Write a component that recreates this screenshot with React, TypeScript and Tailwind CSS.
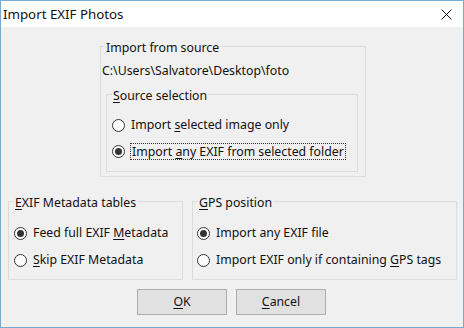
import React from 'react';

function Radio({ checked }: { checked?: boolean }) {
  return (
    <span className="w-[13px] h-[13px] rounded-full border border-[#333333] bg-white flex items-center justify-center shrink-0">
      {checked && <span className="w-[7px] h-[7px] rounded-full bg-[#333333]" />}
    </span>
  );
}

function Legend({ children, ml }: { children: React.ReactNode; ml: string }) {
  return (
    <div className={`-mt-[7px] ${ml} px-[1px] w-fit bg-[#f0f0f0] leading-[16px]`}>{children}</div>
  );
}

const U = ({ children }: { children: React.ReactNode }) => <span className="underline underline-offset-2">{children}</span>;

export default function App() {
  return (
    <div
      className="w-[464px] h-[328px] border border-[#78a9cf] bg-[#f0f0f0] flex flex-col text-[12.3px] text-[#111]"
      style={{ fontFamily: '"Segoe UI", "Noto Sans", sans-serif' }}
    >
      {/* Title bar */}
      <div className="h-[26px] bg-white flex items-center justify-between pl-[2px] pr-[10px] shrink-0">
        <span className="text-[13.3px] leading-[16px]">Import EXIF Photos</span>
        <svg width="11" height="11" viewBox="0 0 11 11" className="mr-[1px]">
          <path d="M0.5 0.5 L10.5 10.5 M10.5 0.5 L0.5 10.5" stroke="#111" strokeWidth="1" />
        </svg>
      </div>

      {/* Import from source */}
      <div className="mt-[19px] ml-[99px] w-[266px] h-[131px] border border-[#dcdcdc] flex flex-col">
        <Legend ml="ml-[4px]">Import from source</Legend>
        <div className="mt-[7px] pl-[1px] leading-[16px]">C:\Users\Salvatore\Desktop\foto</div>
        <div className="mt-[15px] ml-[5px] w-[252px] h-[78px] border border-[#dcdcdc] flex flex-col">
          <Legend ml="ml-[5px]"><U>S</U>ource selection</Legend>
          <div className="mt-[11px] ml-[5px] flex flex-col gap-[6px]">
            <div className="h-[20px] flex items-center gap-[6px]">
              <Radio />
              <span>Import <U>s</U>elected image only</span>
            </div>
            <div className="h-[20px] flex items-center gap-[5px]">
              <Radio checked />
              <span className="border border-dotted border-[#333] px-[1px] leading-[15px]">
                Import <U>a</U>ny EXIF from selected folder
              </span>
            </div>
          </div>
        </div>
      </div>

      {/* Bottom groups */}
      <div className="mt-[24px] ml-[7px] flex gap-[9px]">
        <div className="w-[175px] h-[79px] border border-[#dcdcdc] flex flex-col">
          <Legend ml="ml-[5px]"><U>E</U>XIF Metadata tables</Legend>
          <div className="mt-[12px] ml-[5px] flex flex-col gap-[7px]">
            <div className="h-[20px] flex items-center gap-[6px]">
              <Radio checked />
              <span>Feed full EXIF <U>M</U>etadata</span>
            </div>
            <div className="h-[20px] flex items-center gap-[6px]">
              <Radio />
              <span><U>S</U>kip EXIF Metadata</span>
            </div>
          </div>
        </div>
        <div className="w-[265px] h-[79px] border border-[#dcdcdc] flex flex-col">
          <Legend ml="ml-[5px]"><U>G</U>PS position</Legend>
          <div className="mt-[12px] ml-[4px] flex flex-col gap-[7px]">
            <div className="h-[20px] flex items-center gap-[6px]">
              <Radio checked />
              <span>Import any EXIF file</span>
            </div>
            <div className="h-[20px] flex items-center gap-[6px]">
              <Radio />
              <span>Import EXIF only if containing <U>G</U>PS tags</span>
            </div>
          </div>
        </div>
      </div>

      {/* Buttons */}
      <div className="mt-[9px] ml-[136px] flex gap-[9px]">
        <button className="w-[90px] h-[26px] border border-[#adadad] bg-[#e1e1e1] leading-[16px]">
          <U>O</U>K
        </button>
        <button className="w-[90px] h-[26px] border border-[#adadad] bg-[#e1e1e1] leading-[16px]">
          <U>C</U>ancel
        </button>
      </div>
    </div>
  );
}
